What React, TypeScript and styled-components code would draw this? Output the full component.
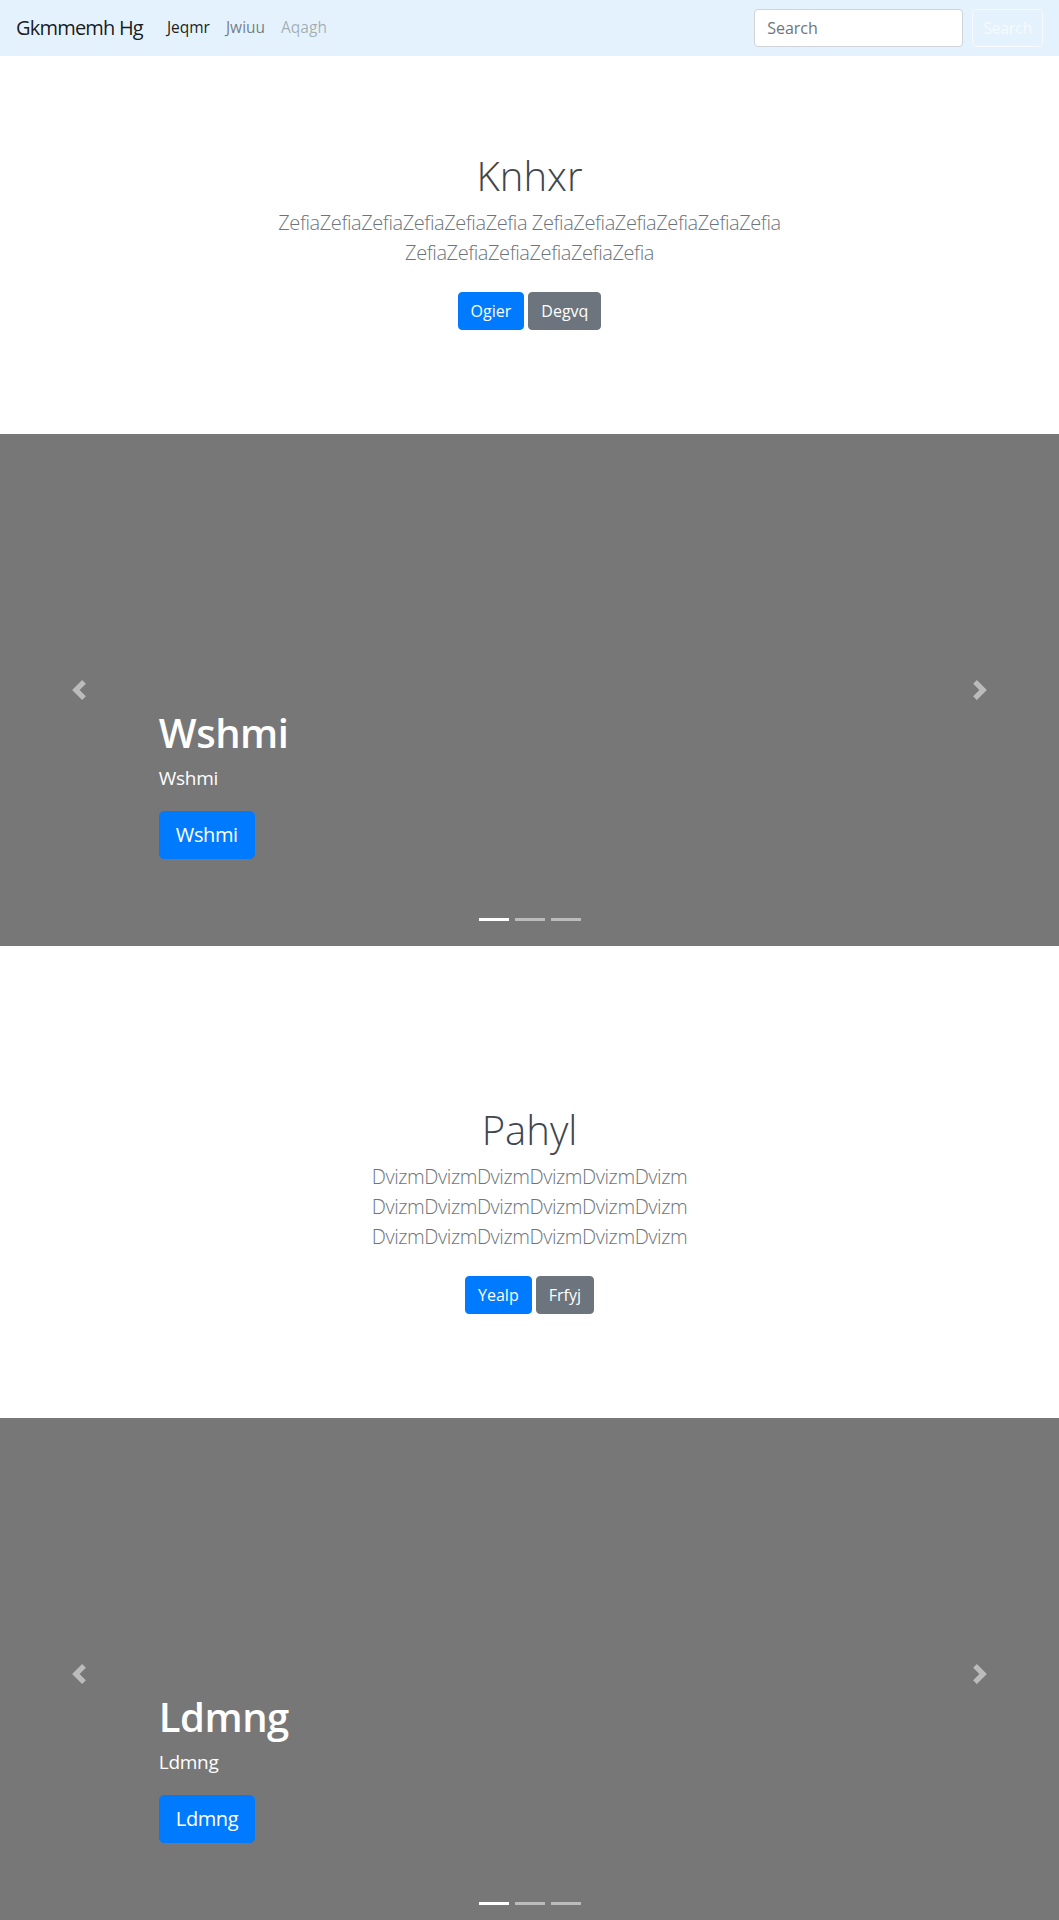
import React from "react";
import styled, { createGlobalStyle } from "styled-components";

const GlobalStyle = createGlobalStyle`
  html, body { margin: 0; padding: 0; }
  body {
    font-family: "Open Sans", "Noto Sans", "Liberation Sans", sans-serif;
    font-size: 16px;
    line-height: 1.5;
    color: #212529;
    background: #fff;
  }
  * { box-sizing: border-box; }
`;

const Navbar = styled.nav`
  display: flex;
  align-items: center;
  justify-content: space-between;
  height: 56px;
  padding: 8px 16px;
  background: #e3f2fd;
`;

const NavLeft = styled.div`
  display: flex;
  align-items: center;
`;

const Brand = styled.a`
  font-size: 20px;
  line-height: 30px;
  letter-spacing: -0.8px;
  color: rgba(0, 0, 0, 0.9);
  text-decoration: none;
  margin-right: 16px;
`;

const NavList = styled.ul`
  display: flex;
  list-style: none;
  margin: 0;
  padding: 0;
`;

const NavLink = styled.a<{ $state?: "active" | "disabled" }>`
  display: block;
  padding: 8px;
  font-size: 15.5px;
  text-decoration: none;
  color: ${(p) =>
    p.$state === "active"
      ? "rgba(0,0,0,0.9)"
      : p.$state === "disabled"
      ? "rgba(0,0,0,0.3)"
      : "rgba(0,0,0,0.5)"};
`;

const SearchForm = styled.form`
  display: flex;
  align-items: center;
  gap: 9px;
`;

const SearchInput = styled.input`
  width: 209px;
  height: 38px;
  padding: 6px 12px;
  font-family: inherit;
  font-size: 16px;
  color: #495057;
  background: #fff;
  border: 1px solid #ced4da;
  border-radius: 4px;
  outline: none;
  &::placeholder { color: #6c757d; }
`;

const OutlineButton = styled.button`
  height: 38px;
  padding: 6px 10px;
  font-family: inherit;
  font-size: 16px;
  letter-spacing: -0.3px;
  color: #f8f9fa;
  background: transparent;
  border: 1px solid #f8f9fa;
  border-radius: 4px;
`;

const Jumbotron = styled.section`
  padding: 96px 15px;
  text-align: center;
  background: #fff;
`;

const JumboInner = styled.div`
  max-width: 640px;
  margin: 0 auto;
  padding: 0 15px;
`;

const JumboHeading = styled.h1`
  margin: 0 0 8px;
  font-size: 40px;
  line-height: 48px;
  font-weight: 300;
  color: #40464c;
`;

const Lead = styled.p`
  margin: 0 0 16px;
  font-size: 20px;
  line-height: 30px;
  font-weight: 300;
  letter-spacing: -0.43px;
  color: #6c757d;
  overflow-wrap: break-word;
`;

const ButtonRow = styled.p`
  margin: 0;
  display: flex;
  justify-content: center;
  gap: 4px;
`;

const Btn = styled.a<{ $variant: "primary" | "secondary" }>`
  display: inline-block;
  margin: 8px 0;
  padding: 6px 12px;
  font-size: 16px;
  line-height: 24px;
  color: #fff;
  text-decoration: none;
  border-radius: 4px;
  border: 1px solid ${(p) => (p.$variant === "primary" ? "#007bff" : "#6c757d")};
  background: ${(p) => (p.$variant === "primary" ? "#007bff" : "#6c757d")};
`;

const Carousel = styled.div`
  position: relative;
  height: 512px;
  background: #777;
  margin-bottom: 64px;
  display: flex;
  flex-direction: column;
  justify-content: flex-end;
  padding: 0 15% 87px;
  color: #fff;
`;

const CaptionTitle = styled.h1`
  margin: 0 0 6px;
  font-size: 40px;
  line-height: 48px;
  font-weight: 600;
  letter-spacing: -0.5px;
`;

const CaptionText = styled.p`
  margin: 0 0 18px;
  font-size: 19px;
  line-height: 30px;
  letter-spacing: -0.3px;
`;

const LargeButton = styled.a`
  align-self: flex-start;
  padding: 8px 16px;
  font-size: 20px;
  line-height: 30px;
  letter-spacing: -0.4px;
  color: #fff;
  text-decoration: none;
  background: #007bff;
  border: 1px solid #007bff;
  border-radius: 5px;
`;

const Control = styled.a<{ $side: "prev" | "next" }>`
  position: absolute;
  top: 0;
  bottom: 0;
  ${(p) => (p.$side === "prev" ? "left: 0;" : "right: 0;")}
  width: 15%;
  display: flex;
  align-items: center;
  justify-content: center;
  opacity: 0.5;
`;

const Indicators = styled.ol`
  position: absolute;
  left: 0;
  right: 0;
  bottom: 25px;
  margin: 0;
  padding: 0;
  list-style: none;
  display: flex;
  justify-content: center;
  gap: 6px;
`;

const Indicator = styled.li<{ $active?: boolean }>`
  width: 30px;
  height: 3px;
  background: #fff;
  opacity: ${(p) => (p.$active ? 1 : 0.5)};
`;

const PrevIcon = () => (
  <svg width="20" height="20" viewBox="0 0 8 8" fill="#fff">
    <path d="M5.25 0l-4 4 4 4 1.5-1.5L4.25 4l2.5-2.5L5.25 0z" />
  </svg>
);

const NextIcon = () => (
  <svg width="20" height="20" viewBox="0 0 8 8" fill="#fff">
    <path d="M2.75 0l-1.5 1.5L3.75 4l-2.5 2.5L2.75 8l4-4-4-4z" />
  </svg>
);

const Hero = ({
  title,
  lead,
  primary,
  secondary,
}: {
  title: string;
  lead: string;
  primary: string;
  secondary: string;
}) => (
  <Jumbotron>
    <JumboInner>
      <JumboHeading>{title}</JumboHeading>
      <Lead>{lead}</Lead>
      <ButtonRow>
        <Btn $variant="primary" href="#">{primary}</Btn>
        <Btn $variant="secondary" href="#">{secondary}</Btn>
      </ButtonRow>
    </JumboInner>
  </Jumbotron>
);

const Slide = ({ label }: { label: string }) => (
  <Carousel>
    <Indicators>
      <Indicator $active />
      <Indicator />
      <Indicator />
    </Indicators>
    <CaptionTitle>{label}</CaptionTitle>
    <CaptionText>{label}</CaptionText>
    <LargeButton href="#">{label}</LargeButton>
    <Control $side="prev" href="#">
      <PrevIcon />
    </Control>
    <Control $side="next" href="#">
      <NextIcon />
    </Control>
  </Carousel>
);

export default function App() {
  const z = "Zefia".repeat(6);
  const d = "Dvizm".repeat(6);
  return (
    <>
      <GlobalStyle />
      <Navbar>
        <NavLeft>
          <Brand href="#">Gkmmemh Hg</Brand>
          <NavList>
            <li><NavLink $state="active" href="#">Jeqmr</NavLink></li>
            <li><NavLink href="#">Jwiuu</NavLink></li>
            <li><NavLink $state="disabled" href="#">Aqagh</NavLink></li>
          </NavList>
        </NavLeft>
        <SearchForm onSubmit={(e) => e.preventDefault()}>
          <SearchInput type="search" placeholder="Search" aria-label="Search" />
          <OutlineButton type="submit">Search</OutlineButton>
        </SearchForm>
      </Navbar>
      <Hero title="Knhxr" lead={`${z} ${z} ${z}`} primary="Ogier" secondary="Degvq" />
      <Slide label="Wshmi" />
      <Hero title="Pahyl" lead={`${d} ${d} ${d}`} primary="Yealp" secondary="Frfyj" />
      <Slide label="Ldmng" />
    </>
  );
}
